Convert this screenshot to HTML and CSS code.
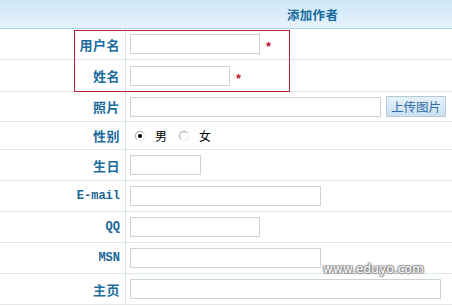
FILE: index.html
```html
<!DOCTYPE html>
<html>
<head>
<meta charset="utf-8">
<link rel="stylesheet" href="styles.css">
</head>
<body>
<div class="page">
  <div class="head"><span class="title">添加作者</span></div>
  <div class="form">
    <div class="row h30"><div class="label">用户名</div><div class="field"><span class="txt w130"></span><span class="req">*</span></div></div>
    <div class="row h31"><div class="label">姓名</div><div class="field"><span class="txt w100"></span><span class="req">*</span></div></div>
    <div class="row h29"><div class="label">照片</div><div class="field"><span class="txt w251"></span><span class="btn">上传图片</span></div></div>
    <div class="row h27"><div class="label">性别</div><div class="field"><span class="radio on"></span><span class="opt">男</span><span class="radio"></span><span class="opt">女</span></div></div>
    <div class="row h30"><div class="label">生日</div><div class="field"><span class="txt w70"></span></div></div>
    <div class="row h30"><div class="label mono">E-mail</div><div class="field"><span class="txt w190"></span></div></div>
    <div class="row h30"><div class="label mono">QQ</div><div class="field"><span class="txt w130"></span></div></div>
    <div class="row h30"><div class="label mono">MSN</div><div class="field"><span class="txt w190"></span></div></div>
    <div class="row h30"><div class="label">主页</div><div class="field"><span class="txt w310"></span></div></div>
  </div>
  <div class="highlight"></div>
  <div class="watermark">www.eduyo.com</div>
</div>
</body>
</html>
```
FILE: styles.css
```css
html, body {
  margin: 0;
  padding: 0;
  background: #ffffff;
}
.page {
  position: relative;
  width: 452px;
  height: 306px;
  overflow: hidden;
  font-family: "Noto Sans CJK SC", "Noto Sans", sans-serif;
}
.head {
  height: 28px;
  border-bottom: 1px solid #a9d2ec;
  background: linear-gradient(#cde7f7, #e6f3fb);
  display: flex;
  align-items: center;
  padding-left: 287px;
  box-sizing: content-box;
}
.title {
  font-size: 12.5px;
  font-weight: 700;
  color: #1a6b9e;
  letter-spacing: 0.3px;
}
.form {
  display: flex;
  flex-direction: column;
}
.row {
  display: flex;
  border-bottom: 1px solid #dde7ee;
}
.h27 { height: 27px; }
.h29 { height: 29px; }
.h30 { height: 30px; }
.h31 { height: 31px; }
.label {
  width: 120px;
  padding-right: 5px;
  border-right: 1px solid #d6e2ea;
  display: flex;
  align-items: center;
  justify-content: flex-end;
  font-size: 13px;
  font-weight: 700;
  color: #1b6c9c;
  letter-spacing: 0.5px;
}
.label.mono {
  font-family: "Liberation Mono", "DejaVu Sans Mono", monospace;
  font-size: 12px;
  letter-spacing: 0;
  color: #1a6496;
}
.field {
  flex: 1;
  display: flex;
  align-items: center;
  padding-left: 4px;
}
.txt {
  display: block;
  height: 20px;
  box-sizing: border-box;
  border: 1px solid #cbd3da;
  background: #ffffff;
}
.w70 { width: 71px; }
.w100 { width: 100px; }
.w130 { width: 130px; }
.w190 { width: 191px; }
.w251 { width: 251px; }
.w310 { width: 311px; }
.req {
  color: #c0162e;
  font-family: "Liberation Sans", sans-serif;
  font-size: 13px;
  font-weight: 700;
  margin-left: 6px;
  margin-top: 5px;
}
.btn {
  margin-left: 5px;
  width: 60px;
  height: 21px;
  box-sizing: border-box;
  border: 1px solid #b7c9d6;
  background: linear-gradient(#e6f2fa, #c9e1f1);
  color: #2f6aa6;
  font-size: 12.5px;
  display: flex;
  align-items: center;
  justify-content: center;
}
.radio {
  width: 10px;
  height: 10px;
  box-sizing: border-box;
  border-radius: 50%;
  border: 1px solid #a0a0a0;
  border-right-color: #e8e8e8;
  border-bottom-color: #e8e8e8;
  background: #ffffff;
  margin-left: 5px;
  display: flex;
  align-items: center;
  justify-content: center;
}
.radio.on::after {
  content: "";
  width: 4px;
  height: 4px;
  border-radius: 50%;
  background: #000000;
}
.radio + .opt {
  margin-left: 10px;
}
.opt {
  font-size: 12px;
  color: #000000;
  margin-right: 6px;
}
.opt + .radio {
  margin-left: 6px;
}
.highlight {
  position: absolute;
  left: 74px;
  top: 30px;
  width: 216px;
  height: 62px;
  box-sizing: border-box;
  border: 1px solid #b2283b;
}
.watermark {
  position: absolute;
  left: 323px;
  top: 262px;
  font-family: "DejaVu Sans", sans-serif;
  font-size: 12px;
  color: #ffffff;
  letter-spacing: 0.2px;
  text-shadow: 0 0 1px #7a7a7a, 1px 1px 1px #8a8a8a, -1px -1px 1px #9a9a9a, 1px -1px 1px #9a9a9a, -1px 1px 1px #9a9a9a;
}
```
